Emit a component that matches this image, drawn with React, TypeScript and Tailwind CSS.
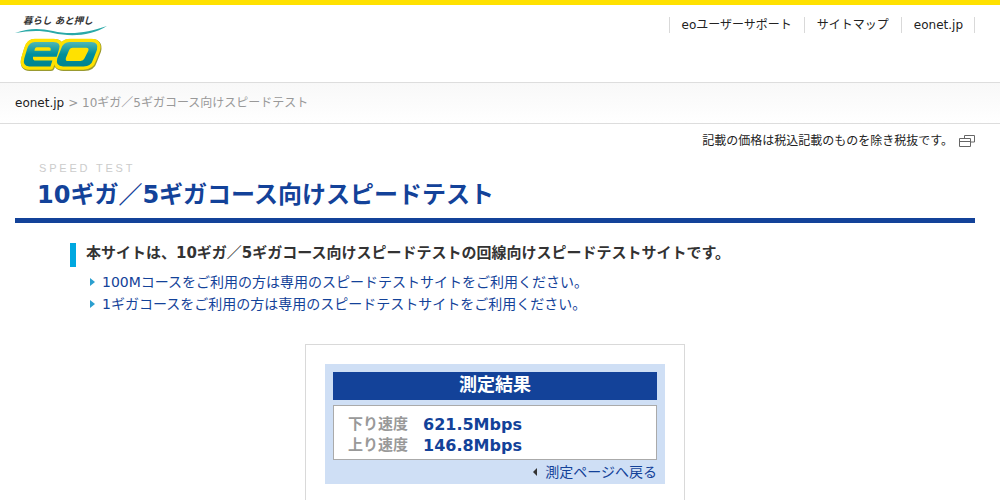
export default function App() {
  const font = "[font-family:'DejaVu_Sans','Noto_Sans_CJK_JP',sans-serif]";
  return (
    <div className={`w-[1000px] h-[500px] overflow-hidden bg-white text-[#333] text-[13px] ${font}`}>
      <div className="h-[5px] bg-[#ffe100]" />
      <header className="h-[77px] w-[960px] ml-[15px] flex justify-between">
        <div className="relative w-[100px] mt-[9px]">
          <Logo />
        </div>
        <nav className="flex items-start mt-[12px] text-[12px] leading-[16px] text-[#222] h-[16px]">
          <a className="px-[12px] border-l border-[#d9d9d9]">eoユーザーサポート</a>
          <a className="px-[12px] border-l border-[#d9d9d9]">サイトマップ</a>
          <a className="pl-[12px] pr-[11px] border-x border-[#d9d9d9]">eonet.jp</a>
        </nav>
      </header>
      <div className="h-[42px] border-y border-[#dddddd] bg-gradient-to-b from-[#f8f8f8] to-white flex items-center px-[15px] text-[12px]">
        <a className="text-[#222]">eonet.jp</a>
        <span className="text-[#999] ml-[4px]">&gt; 10ギガ／5ギガコース向けスピードテスト</span>
      </div>
      <div className="flex justify-end items-center h-[33px] pr-[25px] text-[12px] text-[#222]">
        <span>記載の価格は税込記載のものを除き税抜です。</span>
        <svg className="ml-[6px]" width="16" height="12" viewBox="0 0 16 12" fill="none" stroke="#666">
          <path d="M5.5 3.5V.5h10v6.5h-4" />
          <path d="M.5 3.5h11v8H.5z" />
          <path d="M.5 6.5h11" />
        </svg>
      </div>
      <div className="w-[960px] ml-[15px]">
        <div className="pl-[24px] text-[11px] leading-[12px] tracking-[2.8px] text-[#cccccc] [font-family:'Liberation_Sans',sans-serif] mt-[5px]">SPEED TEST</div>
        <h1 className="pl-[22px] text-[24px] leading-[36px] font-bold text-[#134299] h-[44px] pt-[3px]">10ギガ／5ギガコース向けスピードテスト</h1>
        <div className="h-[5px] bg-[#134299]" />
      </div>
      <section className="ml-[70px] mt-[20px]">
        <div className="border-l-[6px] border-[#00a8e0] pl-[10px] h-[24px] pb-[4px] flex items-center font-bold text-[15px] leading-[20px] text-[#333]">
          本サイトは、10ギガ／5ギガコース向けスピードテストの回線向けスピードテストサイトです。
        </div>
        <ul className="mt-[4px] ml-[20px] text-[#134299] text-[14px]">
          {["100Mコースをご利用の方は専用のスピードテストサイトをご利用ください。", "1ギガコースをご利用の方は専用のスピードテストサイトをご利用ください。"].map((t) => (
            <li key={t} className="flex items-center h-[22px]">
              <span className="w-0 h-0 border-y-[4px] border-y-transparent border-l-[5px] border-l-[#2b9fcf] mr-[7px]" />
              <a>{t}</a>
            </li>
          ))}
        </ul>
      </section>
      <div className="ml-[305px] mt-[29px] w-[380px] h-[200px] border border-[#d9d9d9] pt-[19px] px-[19px]">
        <div className="h-[120px] bg-[#cfdff5] px-[8px] pt-[8px]">
          <div className="h-[28px] bg-[#134299] text-white font-bold text-[18px] leading-[24px] pb-[2px] flex items-center justify-center">測定結果</div>
          <div className="mt-[5px] h-[55px] bg-white border border-[#aaaaaa] pl-[14px] pt-[8px] grid grid-cols-[75px_1fr] grid-rows-[21px_21px] leading-[21px] font-bold">
            <span className="text-[#999] text-[15px]">下り速度</span>
            <span className="text-[#134299] text-[16px]">621.5Mbps</span>
            <span className="text-[#999] text-[15px]">上り速度</span>
            <span className="text-[#134299] text-[16px]">146.8Mbps</span>
          </div>
          <div className="flex justify-end items-center h-[24px] text-[#134299] text-[14px]">
            <span className="w-0 h-0 border-y-[4px] border-y-transparent border-r-[4px] border-r-[#333] mr-[8px]" />
            <a>測定ページへ戻る</a>
          </div>
        </div>
      </div>
    </div>
  );
}

function Logo() {
  const e = "M19 27H38Q46 27 44 34L41.5 42H17Q16.5 46 20 46H37L35 52H13Q6 52 8 44L11 34Q13 27 19 27ZM21 32.5Q19 32.5 18.5 36H35Q36 32.5 33 32.5Z";
  const o = "M55 27H77Q85 27 83 35L79 45Q77 52 69 52H48Q40 52 42 44L46 34Q48 27 55 27ZM58 33H72Q75 33 74 36L70 44Q69 46.5 66 46.5H53Q50 46.5 51 43L54 36Q55 33 58 33Z";
  return (
    <div className="relative w-[95px] h-[62px]">
      <div className="absolute left-[8px] top-[1px] text-[9.5px] leading-[12px] italic font-bold text-[#333] whitespace-nowrap">暮らし あと押し</div>
      <svg className="absolute left-0 top-0" width="95" height="62" viewBox="0 0 95 62">
        <defs>
          <linearGradient id="teal" x1="0" y1="0" x2="0" y2="1">
            <stop offset="0" stopColor="#4fb8b4" />
            <stop offset="0.5" stopColor="#008f9c" />
            <stop offset="1" stopColor="#00838f" />
          </linearGradient>
        </defs>
        <path d="M0 19C14 14 24 14 38 17C55 21 72 19 92 12C76 22 56 23 38 19C24 16 14 17 0 19Z" fill="#2aa9a8" />
        <g transform="translate(1.5 1.5) scale(0.97 0.98)">
          <g strokeLinejoin="round">
            <path d={e} transform="translate(0.5 0.8)" fill="#9a9a30" stroke="#9a9a30" strokeWidth="7.5" />
            <path d={o} transform="translate(0.5 0.8)" fill="#9a9a30" stroke="#9a9a30" strokeWidth="7.5" />
            <path d={e} fill="#ffe100" stroke="#ffe100" strokeWidth="6.5" />
            <path d={o} fill="#ffe100" stroke="#ffe100" strokeWidth="6.5" />
          </g>
          <path d={e} fill="url(#teal)" fillRule="evenodd" />
          <path d={o} fill="url(#teal)" fillRule="evenodd" />
        </g>
      </svg>
    </div>
  );
}
